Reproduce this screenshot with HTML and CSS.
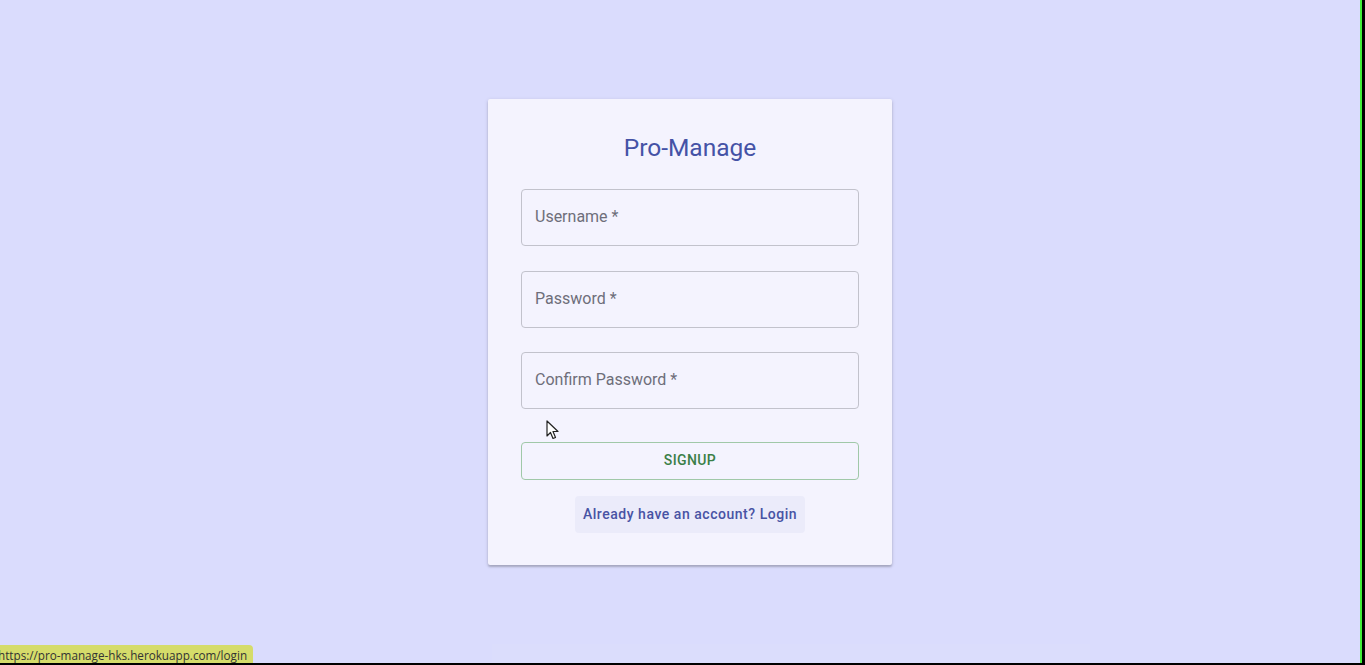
FILE: index.html
```html
<!DOCTYPE html>
<html>
<head>
<meta charset="utf-8">
<title>Pro-Manage</title>
<link rel="stylesheet" href="styles.css">
</head>
<body>
<div class="screen">
  <div class="card">
    <h1 class="title">Pro-Manage</h1>
    <div class="field"><span class="label">Username *</span></div>
    <div class="field"><span class="label">Password *</span></div>
    <div class="field"><span class="label">Confirm Password *</span></div>
    <button class="signup">SIGNUP</button>
    <div class="link-row"><button class="link">Already have an account? Login</button></div>
  </div>
  <svg class="cursor" width="14" height="22" viewBox="0 0 14 22"><path d="M1 1 L1 16 L4.5 12.5 L7 18.5 L9.5 17.5 L7 11.5 L12 11.5 Z" fill="#fff" stroke="#222" stroke-width="1.2" stroke-linejoin="round"/></svg>
  <div class="media-bar"></div>
  <div class="status">https://pro-manage-hks.herokuapp.com/login</div>
</div>
</body>
</html>
```
FILE: styles.css
```css
html, body {
  margin: 0;
  padding: 0;
  background: #000;
  width: 1365px;
  height: 665px;
  overflow: hidden;
}
.screen {
  position: relative;
  width: 1362px;
  height: 663px;
  border-right: 2px solid #41ef37;
  background: #dadcfd;
  font-family: Roboto, "Liberation Sans", sans-serif;
  padding-top: 99px;
  box-sizing: border-box;
}
.card {
  margin-left: 488px;
  width: 404px;
  height: 466px;
  box-sizing: border-box;
  padding: 33px 33px 0;
  background: #f4f3fe;
  border-radius: 2px;
  box-shadow: 0 2px 2px rgba(0,0,0,0.18), 0 1px 4px rgba(0,0,0,0.12);
  display: flex;
  flex-direction: column;
}
.title {
  margin: 0 0 25px;
  font-size: 24.5px;
  font-weight: 400;
  line-height: 32px;
  text-align: center;
  color: #4552a6;
}
.field {
  height: 57px;
  box-sizing: border-box;
  border: 1px solid #c2c2cc;
  border-radius: 4px;
  padding-left: 13px;
  display: flex;
  align-items: center;
  margin-bottom: 25px;
}
.field:nth-of-type(2) { margin-bottom: 24px; }
.field:nth-of-type(3) { margin-bottom: 33px; }
.label {
  font-size: 16px;
  color: #6e6e7a;
  line-height: 1;
  margin-top: -1px;
}
.signup {
  height: 38px;
  border: 1px solid #a0c8a8;
  border-radius: 4px;
  background: transparent;
  color: #3b7f47;
  font-family: Roboto, "Liberation Sans", sans-serif;
  font-size: 14px;
  font-weight: 500;
  letter-spacing: 0.4px;
  padding: 0 0 3px;
}
.link-row {
  display: flex;
  justify-content: center;
  margin-top: 16px;
}
.link {
  height: 37px;
  padding: 0 8px 2px;
  border: none;
  border-radius: 4px;
  background: #ebebfa;
  color: #4853a4;
  font-family: Roboto, "Liberation Sans", sans-serif;
  font-size: 14px;
  font-weight: 500;
  letter-spacing: 0.53px;
}
.cursor {
  position: absolute;
  left: 546px;
  top: 420px;
}
.media-bar {
  position: absolute;
  left: 492px;
  top: 644px;
  width: 598px;
  height: 19px;
  background: #dbddfc;
}
.status {
  position: absolute;
  left: 0;
  bottom: 0;
  height: 18px;
  padding: 0 6px 0 0;
  margin-left: -2px;
  background: #d5dc6a;
  border-top-right-radius: 4px;
  color: #333;
  font-family: "Open Sans", "Liberation Sans", sans-serif;
  font-size: 11.7px;
  line-height: 20px;
}
```
